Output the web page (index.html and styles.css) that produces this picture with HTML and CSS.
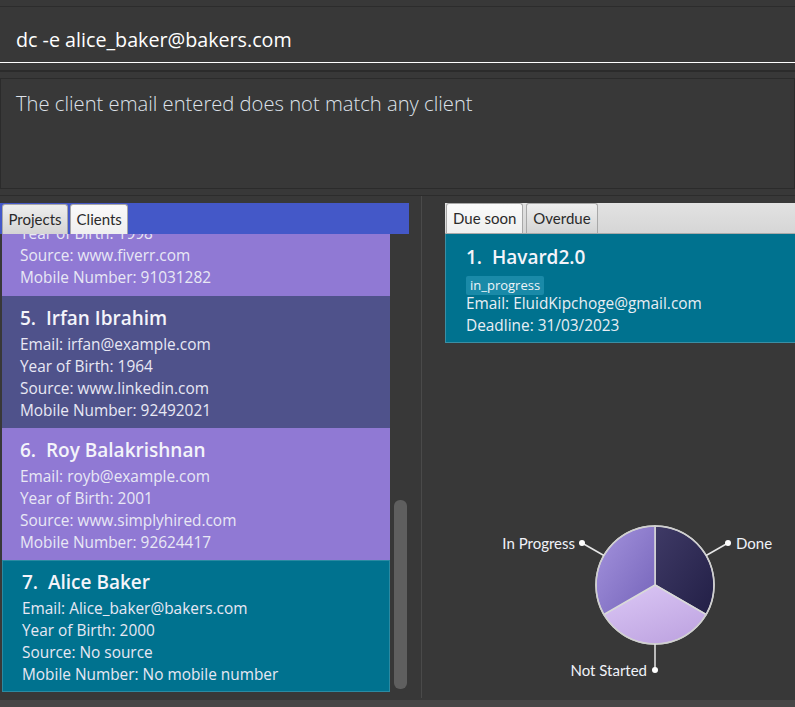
FILE: index.html
```html
<!DOCTYPE html>
<html>
<head>
<meta charset="utf-8">
<link rel="stylesheet" href="styles.css">
</head>
<body>
<div class="app">
  <div class="command-bar">
    <div class="command-field">dc -e alice_baker@bakers.com</div>
  </div>
  <div class="result-bar">
    <div class="result-box">The client email entered does not match any client</div>
  </div>
  <div class="main">
    <div class="left-pane">
      <div class="tabpane clients-tabpane">
        <div class="tab-header blue-header">
          <div class="tab">Projects</div>
          <div class="tab selected">Clients</div>
        </div>
        <div class="tab-body">
          <div class="list-viewport">
            <div class="list scrolled">
              <div class="card purple partial">
                <div class="line">Year of Birth: 1998</div>
                <div class="line">Source: www.fiverr.com</div>
                <div class="line">Mobile Number: 91031282</div>
              </div>
              <div class="card indigo">
                <div class="card-title">5.&nbsp;&nbsp;Irfan Ibrahim</div>
                <div class="line">Email: irfan@example.com</div>
                <div class="line">Year of Birth: 1964</div>
                <div class="line">Source: www.linkedin.com</div>
                <div class="line">Mobile Number: 92492021</div>
              </div>
              <div class="card purple">
                <div class="card-title">6.&nbsp;&nbsp;Roy Balakrishnan</div>
                <div class="line">Email: royb@example.com</div>
                <div class="line">Year of Birth: 2001</div>
                <div class="line">Source: www.simplyhired.com</div>
                <div class="line">Mobile Number: 92624417</div>
              </div>
              <div class="card teal selected-card">
                <div class="card-title">7.&nbsp;&nbsp;Alice Baker</div>
                <div class="line">Email: Alice_baker@bakers.com</div>
                <div class="line">Year of Birth: 2000</div>
                <div class="line">Source: No source</div>
                <div class="line">Mobile Number: No mobile number</div>
              </div>
            </div>
          </div>
          <div class="scrollbar"><div class="thumb"></div></div>
        </div>
      </div>
    </div>
    <div class="divider"></div>
    <div class="right-pane">
      <div class="tabpane deadline-tabpane">
        <div class="tab-header gray-header">
          <div class="tab selected">Due soon</div>
          <div class="tab">Overdue</div>
        </div>
        <div class="project-card">
          <div class="card-title">1.&nbsp;&nbsp;Havard2.0</div>
          <div class="tag-row"><span class="tag">in_progress</span></div>
          <div class="line">Email: EluidKipchoge@gmail.com</div>
          <div class="line">Deadline: 31/03/2023</div>
        </div>
      </div>
      <svg class="pie" width="373" height="356" viewBox="0 0 373 356">
        <defs>
          <linearGradient id="gDone" x1="0" y1="0" x2="1" y2="1">
            <stop offset="0" stop-color="#3f3a66"/>
            <stop offset="1" stop-color="#221f46"/>
          </linearGradient>
          <linearGradient id="gProg" x1="0" y1="0" x2="1" y2="1">
            <stop offset="0" stop-color="#a594de"/>
            <stop offset="1" stop-color="#7463b9"/>
          </linearGradient>
          <linearGradient id="gNot" x1="0" y1="0" x2="0.6" y2="1">
            <stop offset="0" stop-color="#dcc8f6"/>
            <stop offset="1" stop-color="#c0a6e2"/>
          </linearGradient>
        </defs>
        <path d="M233,242 L233,183 A59,59 0 0 1 284.1,271.5 Z" fill="url(#gDone)" stroke="#d9d9d9" stroke-width="1.5"/>
        <path d="M233,242 L284.1,271.5 A59,59 0 0 1 181.9,271.5 Z" fill="url(#gNot)" stroke="#d9d9d9" stroke-width="1.5"/>
        <path d="M233,242 L181.9,271.5 A59,59 0 0 1 233,183 Z" fill="url(#gProg)" stroke="#d9d9d9" stroke-width="1.5"/>
        <circle cx="233" cy="242" r="59" fill="none" stroke="#cfcfcf" stroke-width="1.5"/>
        <g stroke="#e6e6e6" stroke-width="1.5">
          <line x1="181.9" y1="212.5" x2="160" y2="200"/>
          <line x1="284.1" y1="212.5" x2="306" y2="200"/>
          <line x1="233" y1="301" x2="233" y2="327"/>
        </g>
        <g fill="#ffffff">
          <circle cx="160" cy="200" r="3"/>
          <circle cx="306" cy="200" r="3"/>
          <circle cx="233" cy="327" r="3"/>
        </g>
        <g class="pie-label">
          <text x="153" y="205.5" text-anchor="end">In Progress</text>
          <text x="314" y="205.5">Done</text>
          <text x="225" y="332.5" text-anchor="end">Not Started</text>
        </g>
      </svg>
    </div>
  </div>
  <div class="status-strip"></div>
</div>
</body>
</html>
```
FILE: styles.css
```css
* { box-sizing: border-box; }
html, body { margin: 0; padding: 0; }
body {
  background: #383838;
  font-family: "Open Sans", "Noto Sans", sans-serif;
  color: #ffffff;
  width: 795px;
  height: 707px;
  overflow: hidden;
}
.app {
  display: flex;
  flex-direction: column;
  height: 707px;
}
.command-bar {
  padding-top: 6px;
  padding-bottom: 7px;
  border-bottom: 2px solid #2b2b2b;
}
.command-field {
  border-top: 1px solid #2c2c2c;
  border-bottom: 1px solid #ffffff;
  height: 57px;
  padding: 19px 0 8px 16px;
  font-size: 19.7px;
  line-height: 28px;
  color: #ffffff;
  white-space: nowrap;
}
.result-bar {
  padding-top: 6px;
  padding-bottom: 6px;
  border-bottom: 1px solid #2c2c2c;
}
.result-box {
  border: 1px solid #2b2b2b;
  height: 111px;
  padding: 10px 0 0 15px;
  font-size: 20.2px;
  font-weight: 300;
  line-height: 28px;
  color: #dde2ea;
  white-space: nowrap;
}
.main {
  flex: 1;
  display: flex;
  min-height: 0;
}
.left-pane {
  width: 421px;
  padding-top: 7px;
  display: flex;
  flex-direction: column;
}
.divider {
  width: 1px;
  background: #4a4a4a;
  margin-bottom: 2px;
}
.right-pane {
  flex: 1;
  padding-top: 7px;
  display: flex;
  flex-direction: column;
  min-width: 0;
}
.tabpane {
  display: flex;
  flex-direction: column;
}
.clients-tabpane {
  width: 409px;
  flex: 1;
  min-height: 0;
}
.tab-header {
  height: 31px;
  display: flex;
  align-items: flex-end;
  gap: 2px;
  padding-left: 2px;
  flex: none;
  position: relative;
  z-index: 1;
}
.blue-header { background: #4458c8; }
.gray-header {
  background: linear-gradient(#e2e2e2, #d6d6d6);
  border-bottom: 1px solid #a9a9a9;
  padding-left: 1px;
  gap: 3px;
}
.tab {
  height: 30px;
  padding: 0 6px;
  font-family: "Lato", "Open Sans", sans-serif;
  font-size: 15px;
  line-height: 28px;
  color: #2a2a2a;
  border: 1px solid #a8a8a8;
  border-bottom: none;
  border-radius: 3px 3px 0 0;
  background: linear-gradient(#eeeeee, #d4d4d4);
}
.blue-header .tab { padding: 0 5.5px; }
.tab.selected {
  background: linear-gradient(#fafafa, #efefef);
}
.tab-body {
  flex: 1;
  display: flex;
  min-height: 0;
}
.list-viewport {
  width: 388px;
  margin-left: 2px;
  overflow: hidden;
  padding-bottom: 7px;
}
.list.scrolled {
  margin-top: -11px;
}
.card {
  height: 132px;
  padding: 8px 0 6px 18px;
  color: #e8e8f4;
}
.card.partial {
  height: 73px;
  padding: 0 0 7px 18px;
}
.card.purple { background: #9079d4; }
.card.indigo { background: #4f528b; }
.card.teal { background: #00728f; }
.card.selected-card {
  border: 1px solid #2b8aa2;
  padding: 7px 0 5px 19px;
}
.card-title {
  font-size: 19px;
  font-weight: 600;
  line-height: 28px;
  margin-bottom: 2px;
  color: #f4f4fa;
}
.project-card .card-title { margin-bottom: 1px; }
.line {
  font-size: 15.4px;
  line-height: 22px;
  white-space: nowrap;
}
.scrollbar {
  width: 19px;
  display: flex;
  flex-direction: column;
  padding: 266px 2px 11px 4px;
}
.thumb {
  flex: 1;
  background: #5f5f5f;
  border-radius: 6px;
}
.deadline-tabpane {
  margin-left: 23px;
  width: 373px;
}
.project-card {
  height: 109px;
  background: #00728f;
  border-left: 1px solid #3b8ea4;
  border-bottom: 1px solid #3b8ea4;
  padding: 9px 0 7px 20px;
  color: #e8eef4;
}
.tag-row {
  height: 21px;
  padding-top: 1px;
}
.tag {
  display: inline-block;
  background: #1a8aa8;
  border-radius: 2px;
  font-size: 13px;
  line-height: 19px;
  padding: 0 4px;
  color: #eef4f8;
}
.pie {
  display: block;
  flex: none;
}
.pie-label text {
  font-family: "Lato", "Open Sans", sans-serif;
  font-size: 15px;
  fill: #f0f2f8;
}
.status-strip {
  height: 7px;
  background: #464646;
  flex: none;
}
```
